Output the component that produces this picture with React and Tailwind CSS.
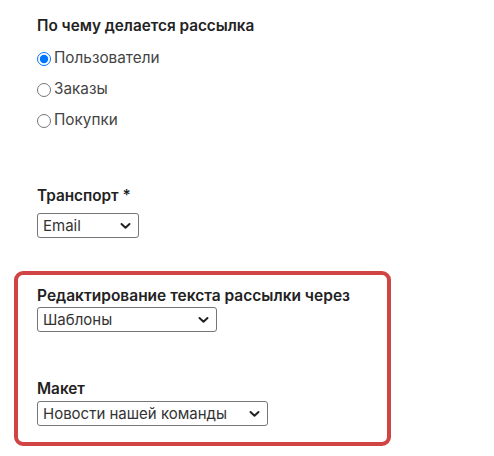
import { useState } from "react";

const font = { fontFamily: "Inter, 'Noto Sans', sans-serif" };

function Chevron() {
  return (
    <svg
      className="pointer-events-none absolute right-[8px] top-1/2 -translate-y-1/2"
      width="11"
      height="7"
      viewBox="0 0 11 7"
      fill="none"
    >
      <path d="M1.5 1.5 5.5 5.2 9.5 1.5" stroke="#222" strokeWidth="2" strokeLinecap="round" strokeLinejoin="round" />
    </svg>
  );
}

function Select({ width, value, options }) {
  return (
    <div className={`relative ${width}`}>
      <select
        defaultValue={value}
        className="block h-[25px] w-full appearance-none rounded-[3px] border border-[#767676] bg-white pl-[5px] pr-[24px] text-[15px] leading-[23px] text-[#333]"
      >
        {options.map((o) => (
          <option key={o}>{o}</option>
        ))}
      </select>
      <Chevron />
    </div>
  );
}

export default function App() {
  const [source, setSource] = useState("users");

  const sources = [
    { id: "users", label: "Пользователи" },
    { id: "orders", label: "Заказы" },
    { id: "purchases", label: "Покупки" },
  ];

  return (
    <div className="min-h-[456px] w-[494px] bg-white pt-[16px]" style={font}>
      <div className="pl-[37px]">
        <div className="text-[15.3px] font-semibold leading-[20px] text-[#222]">По чему делается рассылка</div>
        <div className="mt-[7px] flex flex-col">
          {sources.map((s) => (
            <label key={s.id} className="flex h-[31px] items-center gap-[3px] text-[15.3px] text-[#444]">
              <input
                type="radio"
                name="source"
                checked={source === s.id}
                onChange={() => setSource(s.id)}
                className="m-0 h-[14px] w-[14px] accent-[#0075ff]"
              />
              {s.label}
            </label>
          ))}
        </div>

        <div className="mt-[50px] text-[15.3px] font-semibold leading-[20px] text-[#222]">Транспорт *</div>
        <div className="mt-[7px]">
          <Select width="w-[102px]" value="Email" options={["Email", "SMS", "Push"]} />
        </div>
      </div>

      <div className="ml-[14px] mt-[33px] w-[377px] rounded-[9px] border-[4px] border-[#d04444] pb-[16px] pl-[19px] pt-[11px]">
        <div className="text-[15.5px] font-semibold leading-[20px] text-[#222]">Редактирование текста рассылки через</div>
        <div className="mt-[1px]">
          <Select width="w-[180px]" value="Шаблоны" options={["Шаблоны", "Редактор"]} />
        </div>

        <div className="mt-[47px] text-[15.3px] font-semibold leading-[20px] text-[#222]">Макет</div>
        <div className="mt-[2px]">
          <Select width="w-[231px]" value="Новости нашей команды" options={["Новости нашей команды", "Акции"]} />
        </div>
      </div>
    </div>
  );
}
